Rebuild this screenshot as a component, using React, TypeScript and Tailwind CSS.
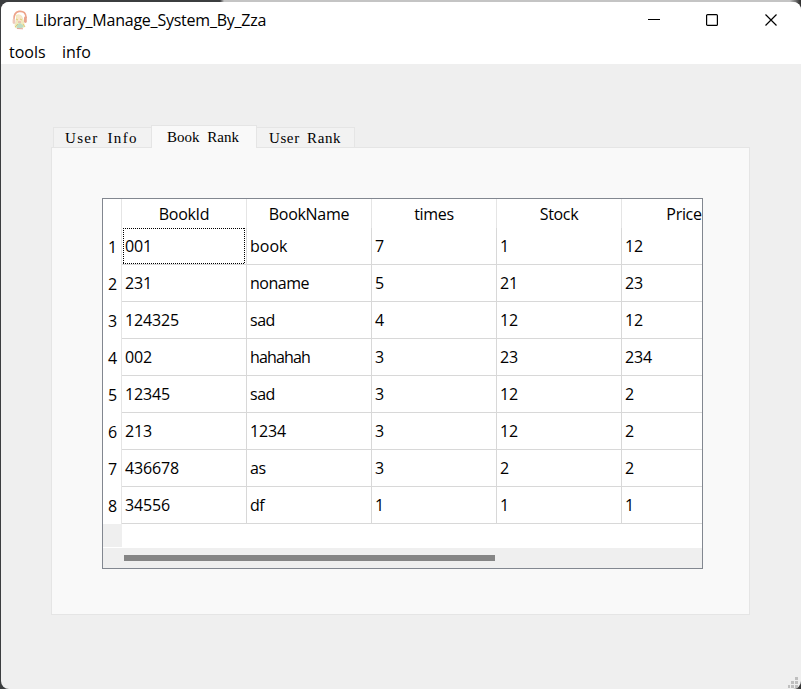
import React from "react";

const uiFont = "font-['Open_Sans','Noto_Sans',sans-serif]";

const columns = ["BookId", "BookName", "times", "Stock", "Price"];

const rows = [
  ["001", "book", "7", "1", "12"],
  ["231", "noname", "5", "21", "23"],
  ["124325", "sad", "4", "12", "12"],
  ["002", "hahahah", "3", "23", "234"],
  ["12345", "sad", "3", "12", "2"],
  ["213", "1234", "3", "12", "2"],
  ["436678", "as", "3", "2", "2"],
  ["34556", "df", "1", "1", "1"],
];

function cellTracking(text: string) {
  if (/^\d+$/.test(text)) return "tracking-[-0.15px]";
  if (text === "book") return "tracking-[0px]";
  return text.length > 6 ? "tracking-[-0.85px]" : "tracking-[-0.5px]";
}

function AppIcon() {
  return (
    <svg width="18" height="22" viewBox="0 0 18 22" className="block shrink-0">
      <path d="M5 6 Q8 4 11 7 L13 12 L14 18 Q10 21 4 19 L3.5 16 L5 12Z" fill="#f0eabf" />
      <path d="M6 7 L9 6 L11 9 L10 13 L7 13Z" fill="#f9e6cc" />
      <path d="M3 11 Q2.5 3.5 8 2.4 Q15 1.5 15.2 9" fill="none" stroke="#eda48a" strokeWidth="1.7" />
      <rect x="1.6" y="9.5" width="2.8" height="5.5" rx="1.4" fill="#efc8b9" />
      <rect x="13" y="7.5" width="2.8" height="6.5" rx="1.4" fill="#e9a48e" />
      <path d="M5 16 L9 14 L13 17 L11 19 L6 19Z" fill="#bedcc4" />
      <path d="M5 10 L7 11 M9 10 L11 11 M4 18 L7 15 M12 15 L14 18" stroke="#e0cd76" strokeWidth="1" />
      <path d="M7 13 L10 13 M6 19.5 L12 19.8" stroke="#e3a69a" strokeWidth="1" />
    </svg>
  );
}

function TitleBar() {
  return (
    <header className="flex h-[38px] items-start justify-between">
      <div className="flex pl-[10px] pt-[7px]">
        <AppIcon />
        <span className="ml-[6px] whitespace-nowrap text-[16px] leading-[22px] tracking-[-0.23px]">Library_Manage_System_By_Zza</span>
      </div>
      <div className="flex pt-[11px] pr-[23px]">
        <svg width="13" height="14" viewBox="0 0 13 14" className="mr-[45px] block">
          <path d="M0 6.5H12" stroke="#000" />
        </svg>
        <svg width="13" height="14" viewBox="0 0 13 14" className="mr-[46px] block">
          <rect x="0.6" y="1.6" width="10.8" height="10.8" rx="1" fill="none" stroke="#000" strokeWidth="1.2" />
        </svg>
        <svg width="13" height="14" viewBox="0 0 13 14" className="block">
          <path d="M0.5 1.5L11.5 12.5M11.5 1.5L0.5 12.5" stroke="#000" strokeWidth="1.2" />
        </svg>
      </div>
    </header>
  );
}

function Tabs() {
  return (
    <div className="ml-[2px] flex h-[22px] items-end whitespace-pre font-['Liberation_Serif',serif] text-[15px]">
      <div className="h-[20px] w-[98px] border-l border-t border-[#e5e5e5] bg-[#f2f2f2] pl-[11px] leading-[20px] tracking-[1.3px] [word-spacing:4px]">User Info</div>
      <div className="relative -mb-px h-[23px] w-[106px] border-x border-t border-[#e5e5e5] bg-[#f9f9f9] pl-[15px] leading-[22px] [word-spacing:4px]">Book Rank</div>
      <div className="h-[20px] w-[98px] border-r border-t border-[#e5e5e5] bg-[#f2f2f2] pl-[12px] leading-[20px] tracking-[0.6px] [word-spacing:3px]">User Rank</div>
    </div>
  );
}

function FocusRect() {
  return (
    <svg width="122" height="36" className="absolute left-[1px] top-0">
      <path
        d="M0 0.5H122M0 35.5H122M0.5 0V36M121.5 0V36"
        fill="none"
        stroke="#000"
        strokeDasharray="1 1"
        shapeRendering="crispEdges"
      />
    </svg>
  );
}

function BookTable() {
  return (
    <div className="h-[371px] w-[601px] overflow-hidden border border-[#828790] bg-white text-[16px]">
      <div className="flex h-[29px]">
        <div className="w-[19px] shrink-0 border-r border-[#e5e5e5]" />
        {columns.map((label) => (
          <div key={label} className="w-[125px] shrink-0 border-r border-[#e5e5e5] text-center leading-[31px] tracking-[-0.3px]">
            {label}
          </div>
        ))}
      </div>
      {rows.map((row, r) => (
        <div key={r} className="flex h-[37px]">
          <div className="w-[19px] shrink-0 border-r border-[#e5e5e5] pl-px text-center leading-[38px]">{r + 1}</div>
          {row.map((cell, c) => (
            <div key={c} className={`relative w-[125px] shrink-0 border-b border-r border-[#d8d8d8] pl-[3px] leading-[36px] ${cellTracking(cell)}`}>
              {cell}
              {r === 0 && c === 0 && <FocusRect />}
            </div>
          ))}
        </div>
      ))}
      <div className="h-[23px] w-[19px] bg-[#efefef]" />
      <div className="mt-px flex h-[20px] items-start bg-[#efefef] pl-[21px] pt-[7px]">
        <div className="h-[6px] w-[371px] bg-[#858585]" />
      </div>
    </div>
  );
}

function SizeGrip() {
  return (
    <svg width="12" height="12" viewBox="0 0 12 12" className="absolute bottom-0 right-[2px]">
      <g fill="#bfbfbf">
        <rect x="8" y="0" width="3" height="3" />
        <rect x="4" y="4" width="3" height="3" />
        <rect x="8" y="4" width="3" height="3" />
        <rect x="1" y="8" width="2" height="3" />
        <rect x="4" y="8" width="3" height="3" />
        <rect x="8" y="8" width="3" height="3" />
      </g>
    </svg>
  );
}

export default function App() {
  return (
    <div className="h-[689px] w-[801px] overflow-hidden bg-[linear-gradient(to_right,#3b3d3f_0,#3b3d3f_220px,#c4c4c4_224px,#c4c4c4_790px,#333_800px)] pl-px pt-[2px]">
      <div className={`relative h-[687px] w-[800px] overflow-hidden rounded-[8px] bg-[#efefef] text-black ${uiFont}`}>
        <div className="bg-white">
          <TitleBar />
          <nav className="flex h-[24px] pl-[8px] text-[16px] leading-[24px]">
            <span className="w-[53px]">tools</span>
            <span>info</span>
          </nav>
        </div>
        <main className="pl-[50px] pt-[61px]">
          <Tabs />
          <section className="h-[468px] w-[699px] border border-[#e5e5e5] bg-[#f9f9f9] pl-[50px] pt-[50px]">
            <BookTable />
          </section>
        </main>
        <SizeGrip />
      </div>
    </div>
  );
}
